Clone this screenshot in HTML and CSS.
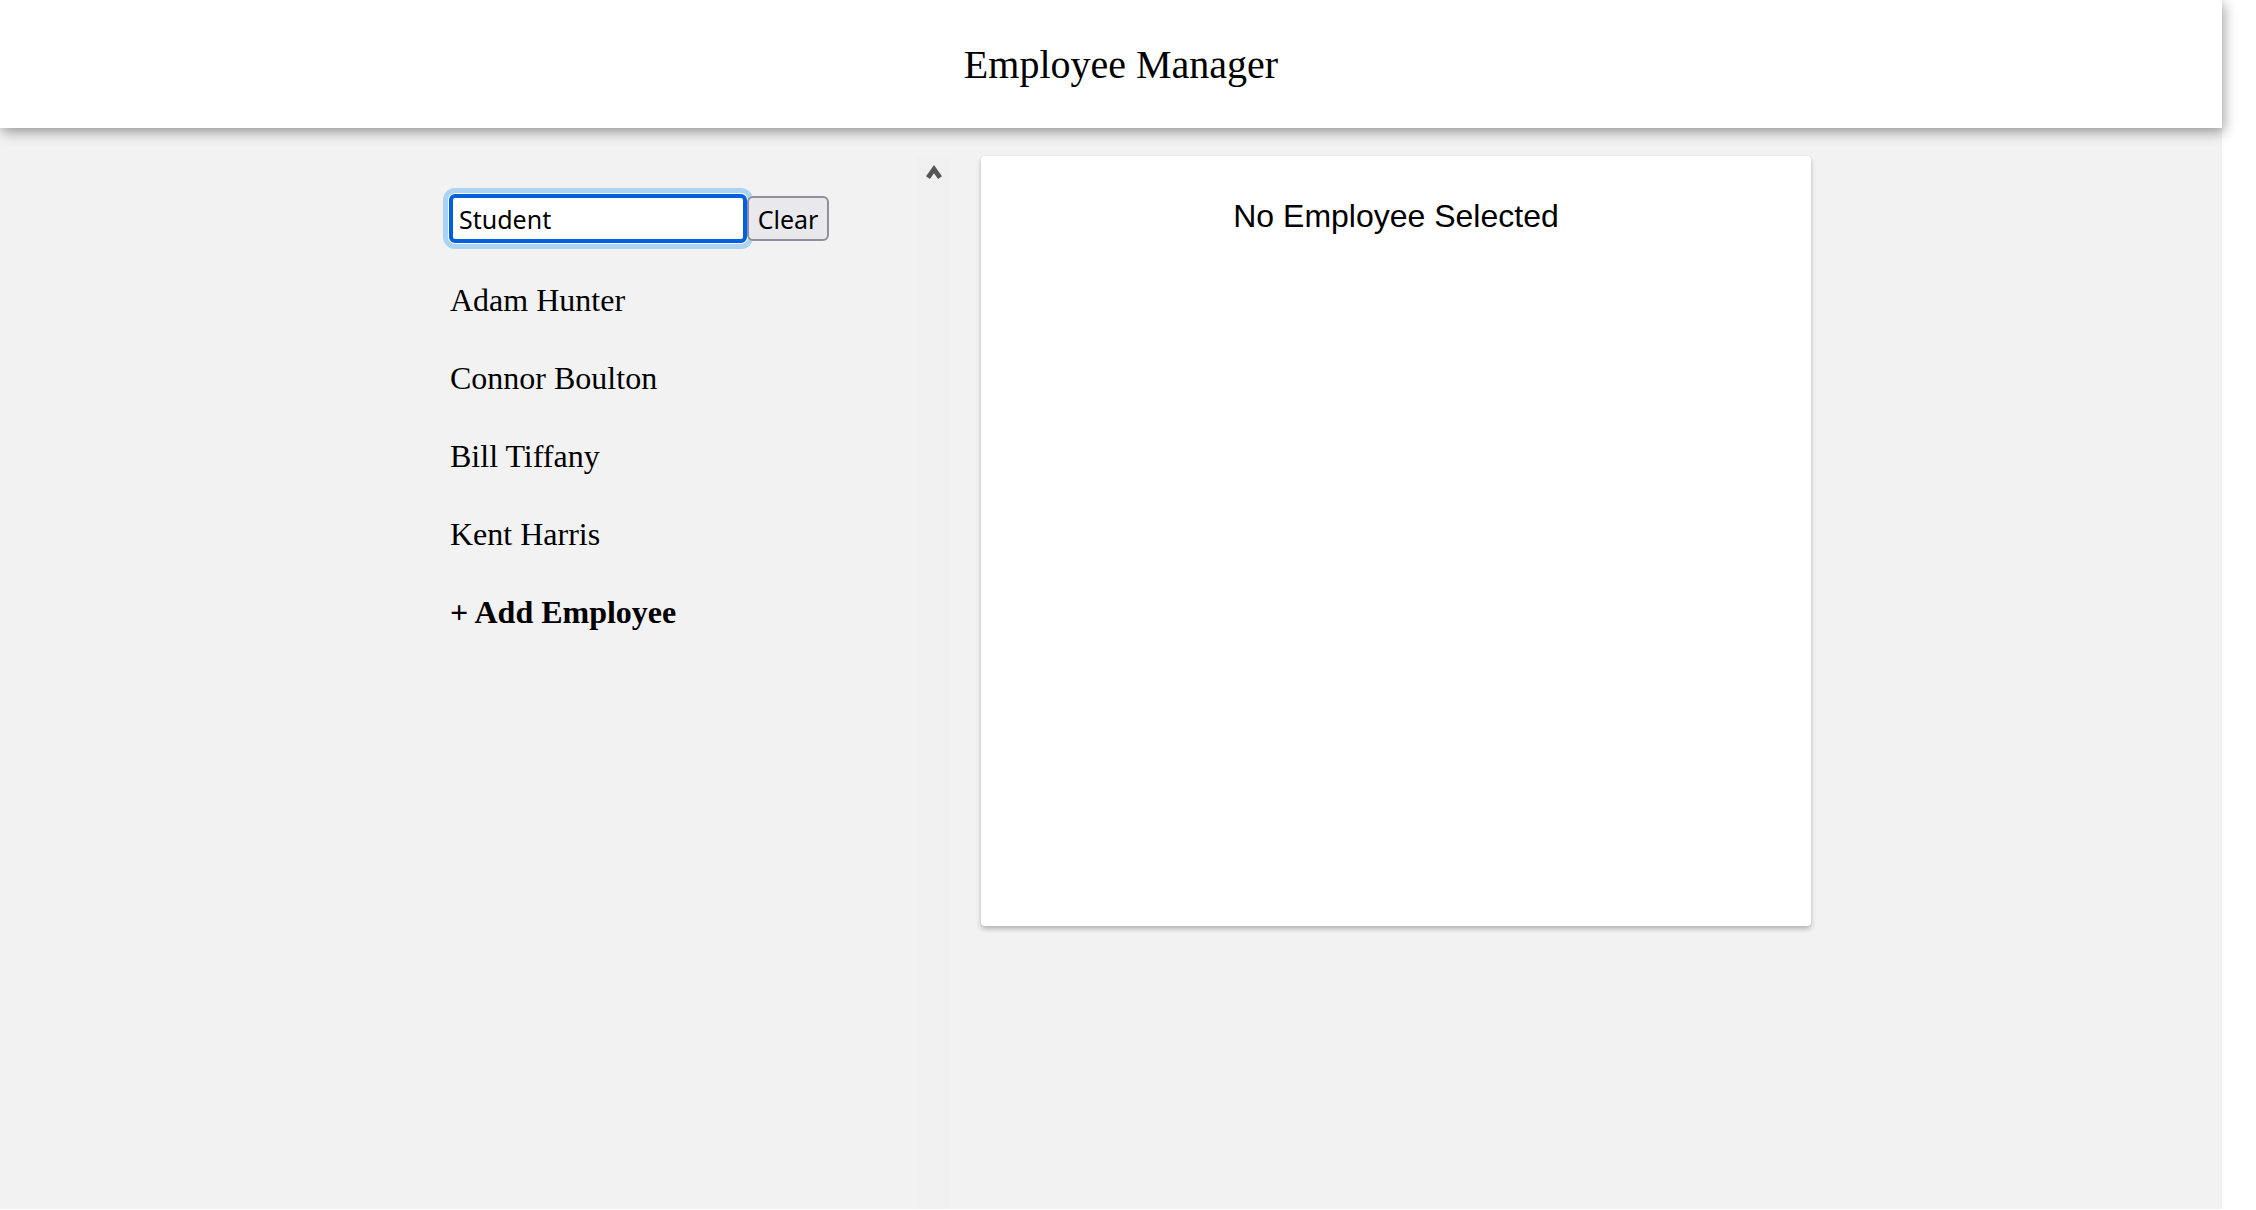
FILE: index.html
```html
<!DOCTYPE html>
<html lang="en">
<head>
<meta charset="utf-8">
<title>Employee Manager</title>
<link rel="stylesheet" href="styles.css">
</head>
<body>
<div class="app">
  <header class="topbar">
    <h1 class="title">Employee Manager</h1>
  </header>
  <main class="main">
    <aside class="sidebar">
      <div class="sidebar-content">
        <div class="search-row">
          <input class="search is-focused" type="text" value="Student">
          <button class="clear" type="button">Clear</button>
        </div>
        <ul class="employee-list">
          <li class="employee">Adam Hunter</li>
          <li class="employee">Connor Boulton</li>
          <li class="employee">Bill Tiffany</li>
          <li class="employee">Kent Harris</li>
          <li class="employee employee-add">+ Add Employee</li>
        </ul>
      </div>
      <div class="scrollbar">
        <svg class="scroll-arrow" width="16" height="16" viewBox="0 0 16 16" aria-hidden="true">
          <polyline points="2,13.6 8,5.2 14,13.6" fill="none" stroke="#555555" stroke-width="4.8" stroke-linejoin="miter" stroke-miterlimit="6"/>
        </svg>
      </div>
    </aside>
    <section class="details">
      <h2 class="details-title">No Employee Selected</h2>
    </section>
  </main>
</div>
</body>
</html>
```

FILE: styles.css
```css
html, body {
  margin: 0;
  padding: 0;
  background: #ffffff;
}

.app {
  width: 2222px;
  font-family: "Liberation Serif", "Times New Roman", serif;
  color: #000;
}

.topbar {
  position: relative;
  z-index: 1;
  height: 128px;
  box-sizing: border-box;
  padding: 42px 0 0 20px;
  background: #ffffff;
  box-shadow: 2px 4px 12px rgba(0, 0, 0, 0.38);
}

.title {
  margin: 0;
  font-family: "Liberation Serif", "Times New Roman", serif;
  font-size: 40px;
  font-weight: normal;
  line-height: 46px;
  text-align: center;
}

.main {
  display: flex;
  align-items: flex-start;
  height: 1081px;
  box-sizing: border-box;
  padding-top: 28px;
  background: #f2f2f2;
}

.sidebar {
  display: flex;
  flex: 0 0 951px;
  height: 1054px;
  background: #f2f2f2;
}

.sidebar-content {
  flex: 1;
  padding: 38px 0 0 449px;
}

.search-row {
  display: flex;
  align-items: center;
  height: 49px;
}

.search {
  width: 298px;
  height: 49px;
  box-sizing: border-box;
  margin: 0;
  padding: 0 6px;
  border: 4px solid #0060df;
  border-radius: 6px;
  background: #ffffff;
  font-family: "Noto Sans", "Open Sans", sans-serif;
  font-size: 25px;
  color: #000;
  outline: none;
}

.search.is-focused {
  box-shadow: 0 0 0 1px #ffffff, 0 0 0 6px #acd3f2;
}

.clear {
  width: 82px;
  height: 45px;
  box-sizing: border-box;
  margin: 0;
  padding: 0;
  border: 2px solid #8f8f9d;
  border-radius: 6px;
  background: #e9e9ed;
  font-family: "Noto Sans", "Open Sans", sans-serif;
  font-size: 25px;
  color: #000;
}

.employee-list {
  list-style: none;
  margin: 18px 0 0 0;
  padding: 0;
}

.employee {
  padding: 20px 0 20px 1px;
  font-size: 32px;
  line-height: 38px;
}

.employee-add {
  font-weight: bold;
}

.scrollbar {
  flex: 0 0 34px;
  display: flex;
  justify-content: center;
  padding-top: 8px;
  box-sizing: border-box;
  background: #f0f0f0;
}

.scroll-arrow {
  display: block;
}

.details {
  flex: 0 0 830px;
  height: 770px;
  margin-left: 30px;
  box-sizing: border-box;
  padding-top: 42px;
  background: #ffffff;
  border-radius: 4px;
  box-shadow: 0 3px 5px rgba(0, 0, 0, 0.26);
}

.details-title {
  margin: 0;
  font-family: "Liberation Sans", Arial, sans-serif;
  font-size: 32px;
  font-weight: normal;
  text-align: center;
}
```
